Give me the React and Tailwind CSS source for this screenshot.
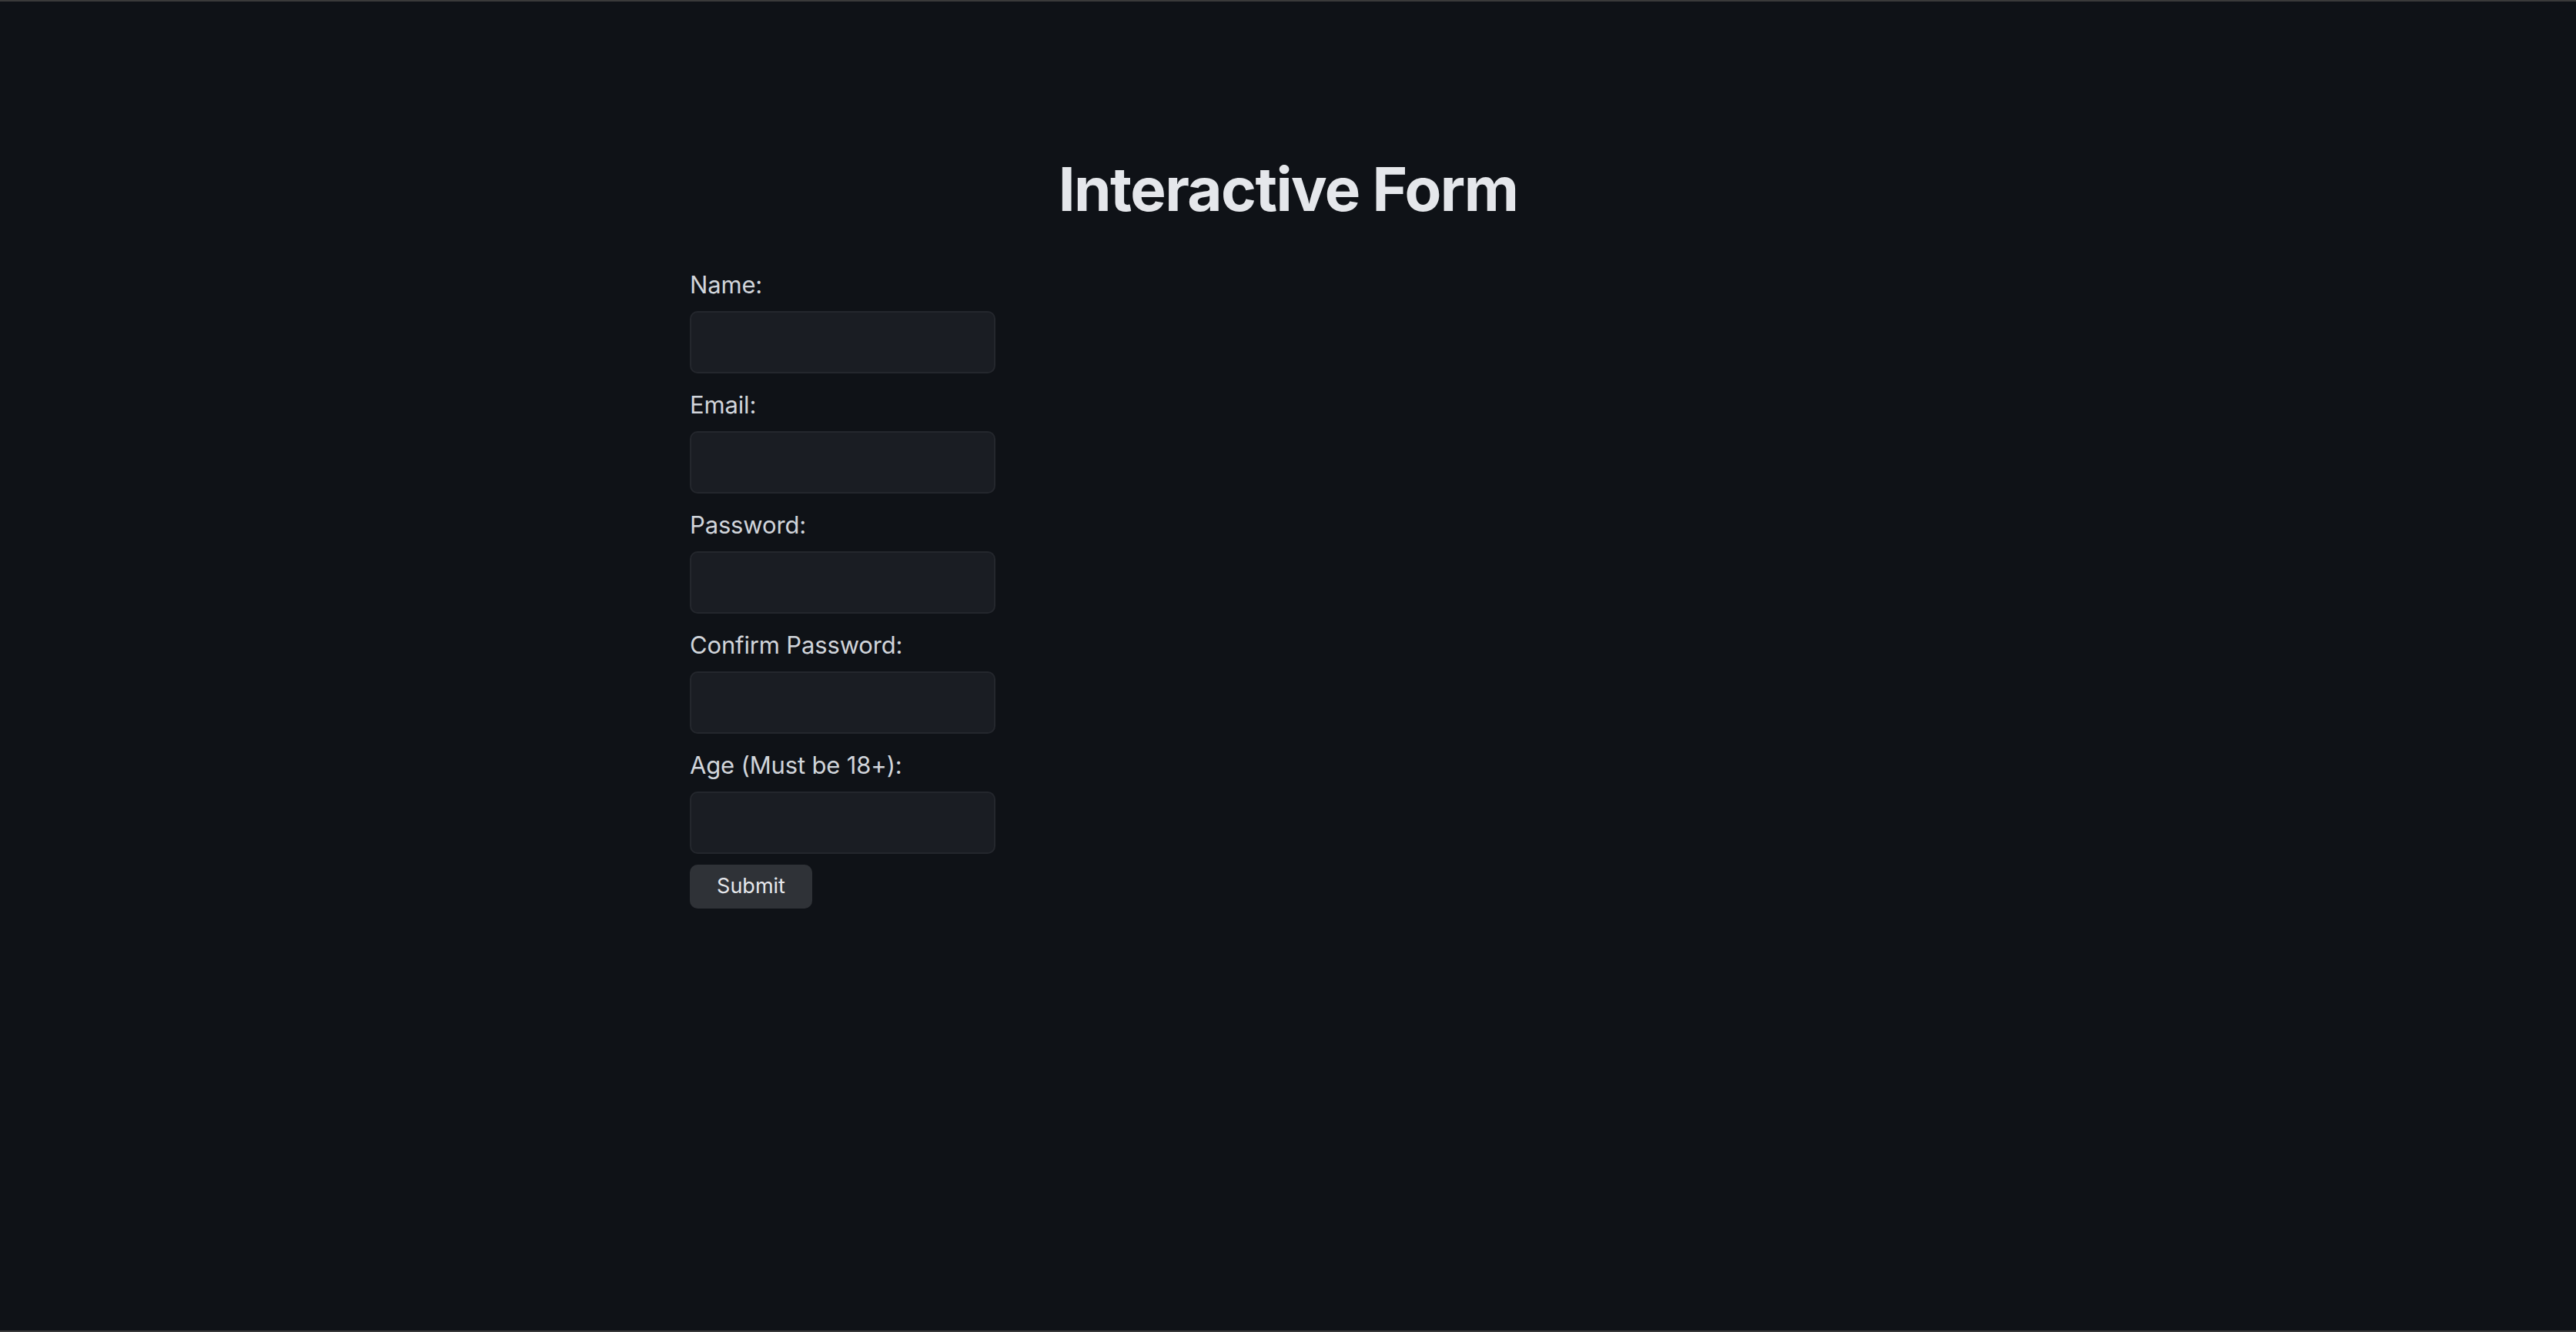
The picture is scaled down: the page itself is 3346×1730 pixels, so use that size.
export default function App() {
  const fields = [
    { label: 'Name:', type: 'text' },
    { label: 'Email:', type: 'email' },
    { label: 'Password:', type: 'password' },
    { label: 'Confirm Password:', type: 'password' },
    { label: 'Age (Must be 18+):', type: 'number' },
  ]

  return (
    <div className="h-[1730px] bg-[#0f1217] border-t-2 border-b-2 border-[#3a3a3a] font-['Inter',sans-serif] overflow-hidden">
      <div className="w-[1554px] mx-auto pt-[197px]">
        <h1 className="text-center text-[78px] font-bold leading-[94px] tracking-[-0.02em] text-[#e5e7eb]">
          Interactive Form
        </h1>

        <form className="mt-[57px] flex flex-col items-start" onSubmit={(e) => e.preventDefault()}>
          {fields.map((f, i) => (
            <div key={f.label} className={i === 0 ? '' : 'mt-[21px]'}>
              <label className="block text-[31px] leading-[40px] tracking-[-0.005em] text-[#d1d5db]">{f.label}</label>
              <input
                type={f.type}
                className="mt-[14px] block w-[397px] h-[81px] rounded-[10px] border-2 border-[#24272d] bg-[#1a1d23] outline-none"
              />
            </div>
          ))}

          <button
            type="submit"
            className="mt-[14px] w-[159px] h-[57px] rounded-[10px] bg-[#2f3237] text-[27px] text-[#e5e7eb]"
          >
            Submit
          </button>
        </form>
      </div>
    </div>
  )
}
